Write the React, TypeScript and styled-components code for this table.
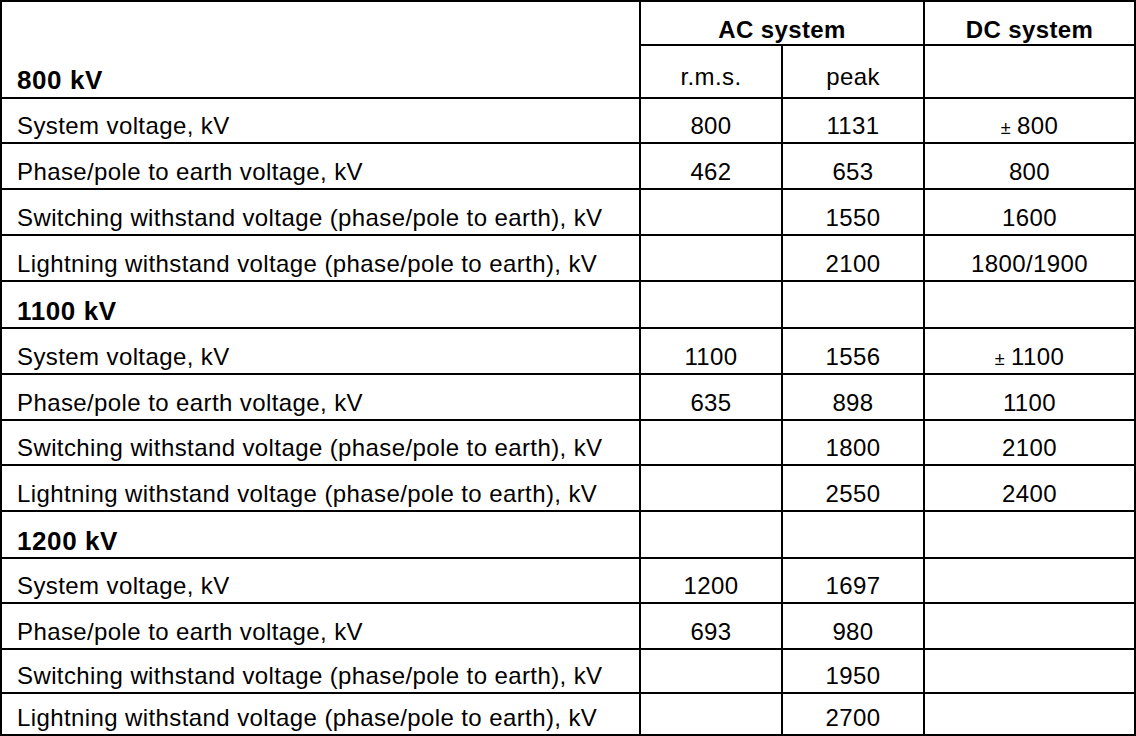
import styled, { createGlobalStyle } from "styled-components";

const GlobalStyle = createGlobalStyle`
  html, body {
    margin: 0;
    padding: 0;
    background: #fff;
  }
  body {
    font-family: "Liberation Sans", Arial, Helvetica, sans-serif;
    color: #000;
  }
`;

const Table = styled.table`
  width: 1136px;
  border-collapse: collapse;
  table-layout: fixed;
  font-size: 24px;
  line-height: 27px;
  letter-spacing: 0.4px;
`;

const Cell = styled.td<{ $align?: "left" | "center"; $bold?: boolean }>`
  border: 2px solid #000;
  padding: 0 0 3px ${(p) => (p.$align === "left" ? "15px" : "0")};
  text-align: ${(p) => p.$align ?? "center"};
  vertical-align: bottom;
  font-weight: ${(p) => (p.$bold ? 700 : 400)};
  white-space: nowrap;
`;

const HeadCell = styled(Cell)`
  padding-bottom: 1px;
`;

const SectionCell = styled(Cell)`
  font-size: 26px;
  letter-spacing: 0.6px;
  padding-bottom: 2px;
`;

const Row = styled.tr<{ $h: number }>`
  height: ${(p) => p.$h}px;
`;

const PlusMinus = styled.span`
  display: inline-block;
  font-size: 18px;
  margin-right: 6px;
`;

const Shift = styled.span`
  display: inline-block;
  transform: translateY(3px);
`;

type Line = [string, string, string, string];

type Section = {
  title: string;
  rows: Line[];
};

const sections: Section[] = [
  {
    title: "800 kV",
    rows: [
      ["System voltage, kV", "800", "1131", "±800"],
      ["Phase/pole to earth voltage, kV", "462", "653", "800"],
      ["Switching withstand voltage (phase/pole to earth), kV", "", "1550", "1600"],
      ["Lightning withstand voltage (phase/pole to earth), kV", "", "2100", "1800/1900"],
    ],
  },
  {
    title: "1100 kV",
    rows: [
      ["System voltage, kV", "1100", "1556", "±1100"],
      ["Phase/pole to earth voltage, kV", "635", "898", "1100"],
      ["Switching withstand voltage (phase/pole to earth), kV", "", "1800", "2100"],
      ["Lightning withstand voltage (phase/pole to earth), kV", "", "2550", "2400"],
    ],
  },
  {
    title: "1200 kV",
    rows: [
      ["System voltage, kV", "1200", "1697", ""],
      ["Phase/pole to earth voltage, kV", "693", "980", ""],
      ["Switching withstand voltage (phase/pole to earth), kV", "", "1950", ""],
      ["Lightning withstand voltage (phase/pole to earth), kV", "", "2700", ""],
    ],
  },
];

// measured row pitches in the reference, after the header
const heights = [45, 46, 46, 46, 47, 46, 46, 45, 46, 47, 45, 46, 44, 42];

const DcValue = ({ value }: { value: string }) => {
  if (value.startsWith("±")) {
    return (
      <Shift>
        <PlusMinus>±</PlusMinus>
        {value.slice(1)}
      </Shift>
    );
  }
  return <>{value}</>;
};

export default function App() {
  let rowIndex = 0;

  return (
    <>
      <GlobalStyle />
      <Table>
        <colgroup>
          <col style={{ width: 639 }} />
          <col style={{ width: 142 }} />
          <col style={{ width: 142 }} />
          <col />
        </colgroup>
        <thead>
          <Row $h={44}>
            <SectionCell $align="left" $bold rowSpan={2} style={{ paddingBottom: 3 }}>
              {sections[0].title}
            </SectionCell>
            <HeadCell colSpan={2} $bold>
              AC system
            </HeadCell>
            <HeadCell $bold>DC system</HeadCell>
          </Row>
          <Row $h={53}>
            <HeadCell style={{ paddingBottom: 7 }}>r.m.s.</HeadCell>
            <HeadCell style={{ paddingBottom: 7 }}>peak</HeadCell>
            <HeadCell />
          </Row>
        </thead>
        <tbody>
          {sections.map((section, si) => (
            <>
              {si > 0 && (
                <Row key={section.title} $h={heights[rowIndex++]}>
                  <SectionCell $align="left" $bold>
                    {section.title}
                  </SectionCell>
                  <Cell />
                  <Cell />
                  <Cell />
                </Row>
              )}
              {section.rows.map((r, ri) => (
                <Row key={`${si}-${ri}`} $h={heights[rowIndex++]}>
                  <Cell $align="left">{r[0]}</Cell>
                  <Cell>{r[1]}</Cell>
                  <Cell>{r[2]}</Cell>
                  <Cell>
                    <DcValue value={r[3]} />
                  </Cell>
                </Row>
              ))}
            </>
          ))}
        </tbody>
      </Table>
    </>
  );
}
